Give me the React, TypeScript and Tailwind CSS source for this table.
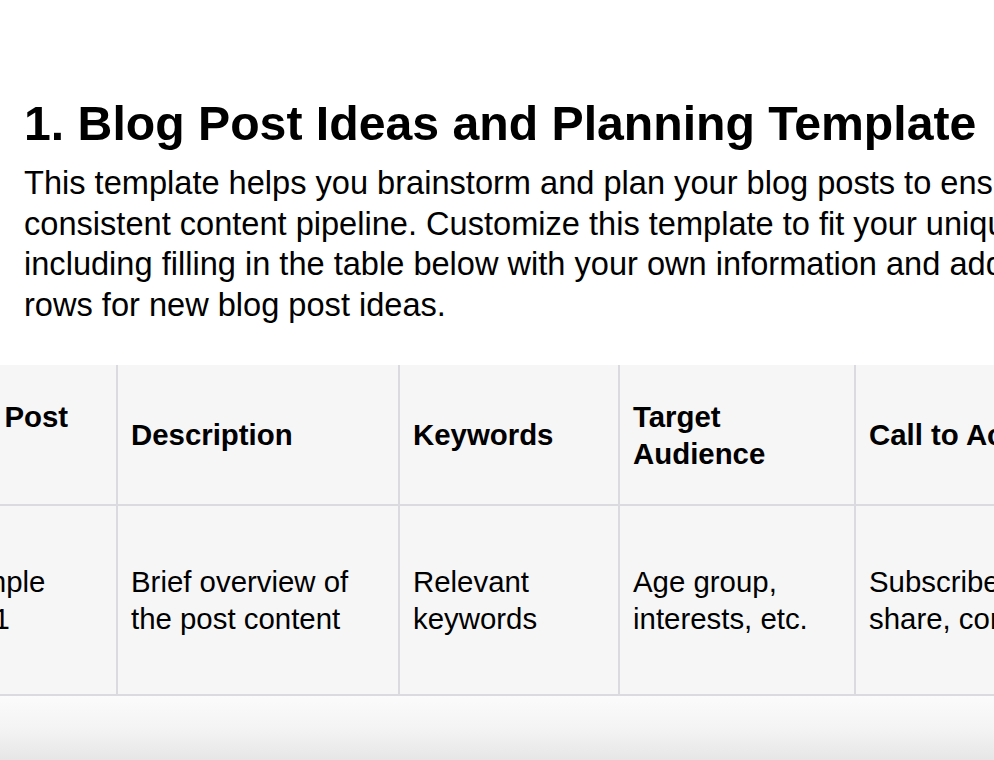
const headers = ['Blog Post Title', 'Description', 'Keywords', 'Target Audience', 'Call to Action']
const row = ['Example Title 1', 'Brief overview of the post content', 'Relevant keywords', 'Age group, interests, etc.', 'Subscribe, share, comment']
const widths = ['w-[200px]', 'w-[282px]', 'w-[220px]', 'w-[236px]', 'w-[240px]']

const intro = [
  'This template helps you brainstorm and plan your blog posts to ensure a',
  'consistent content pipeline. Customize this template to fit your unique needs,',
  'including filling in the table below with your own information and adding more',
  'rows for new blog post ideas.',
]

export default function App() {
  return (
    <div className="h-[760px] w-full overflow-hidden bg-white text-black font-['Liberation_Sans',Arial,sans-serif]">
      <div className="pl-6 pt-[95px]">
        <h1 className="text-[48.2px] font-bold leading-[56px] whitespace-nowrap">
          1. Blog Post Ideas and Planning Template
        </h1>
        <p className="mt-3 text-[32.6px] leading-[40.5px] whitespace-nowrap">
          {intro.map((line) => (
            <span key={line} className="block">{line}</span>
          ))}
        </p>
      </div>

      {/* table, scrolled sideways */}
      <div className="mt-10 -ml-[82px] flex flex-col bg-[#f6f6f6] text-[29.4px] leading-[37px]">
        <div className="flex h-[141px] border-b-2 border-[#dadadf]">
          {headers.map((h, i) => (
            <div key={h} className={`${widths[i]} shrink-0 flex items-center border-r-2 border-[#dadadf] pl-[13px] pr-3 font-bold`}>
              {h}
            </div>
          ))}
        </div>
        <div className="flex h-[190px] border-b-2 border-[#dadadf]">
          {row.map((c, i) => (
            <div key={c} className={`${widths[i]} shrink-0 flex items-center border-r-2 border-[#dadadf] pl-[13px] pr-3`}>
              {c}
            </div>
          ))}
        </div>
      </div>
      <div className="h-[64px] w-full bg-gradient-to-b from-[#fbfbfb] via-[#f4f4f4] to-[#e6e6e6]" />
    </div>
  )
}
